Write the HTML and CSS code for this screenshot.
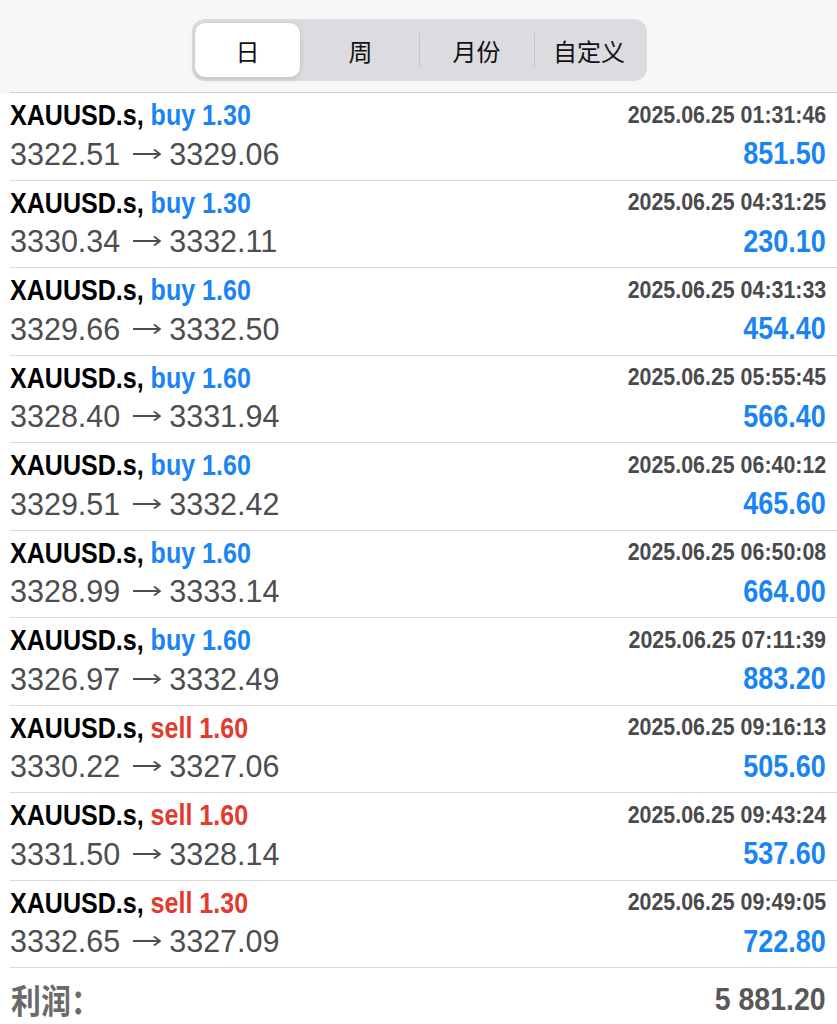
FILE: index.html
```html
<!DOCTYPE html>
<html lang="zh">
<head>
<meta charset="utf-8">
<title>历史</title>
<link rel="stylesheet" href="styles.css">
</head>
<body>
<header class="top">
  <div class="seg">
    <div class="seg-item active">日</div>
    <div class="seg-item">周</div>
    <div class="seg-item div">月份</div>
    <div class="seg-item div">自定义</div>
  </div>
</header>
<main class="list">
  <div class="row"><div class="line"><span class="sym">XAUUSD.s, <span class="buy">buy 1.30</span></span><span class="time">2025.06.25 01:31:46</span></div><div class="line"><span class="px">3322.51 <svg class="arr" viewBox="0 0 28 14" width="28" height="14"><path d="M0 7H27M21 2.5L27 7L21 11.5"/></svg> 3329.06</span><span class="pl">851.50</span></div></div>
  <div class="row"><div class="line"><span class="sym">XAUUSD.s, <span class="buy">buy 1.30</span></span><span class="time">2025.06.25 04:31:25</span></div><div class="line"><span class="px">3330.34 <svg class="arr" viewBox="0 0 28 14" width="28" height="14"><path d="M0 7H27M21 2.5L27 7L21 11.5"/></svg> 3332.11</span><span class="pl">230.10</span></div></div>
  <div class="row"><div class="line"><span class="sym">XAUUSD.s, <span class="buy">buy 1.60</span></span><span class="time">2025.06.25 04:31:33</span></div><div class="line"><span class="px">3329.66 <svg class="arr" viewBox="0 0 28 14" width="28" height="14"><path d="M0 7H27M21 2.5L27 7L21 11.5"/></svg> 3332.50</span><span class="pl">454.40</span></div></div>
  <div class="row"><div class="line"><span class="sym">XAUUSD.s, <span class="buy">buy 1.60</span></span><span class="time">2025.06.25 05:55:45</span></div><div class="line"><span class="px">3328.40 <svg class="arr" viewBox="0 0 28 14" width="28" height="14"><path d="M0 7H27M21 2.5L27 7L21 11.5"/></svg> 3331.94</span><span class="pl">566.40</span></div></div>
  <div class="row"><div class="line"><span class="sym">XAUUSD.s, <span class="buy">buy 1.60</span></span><span class="time">2025.06.25 06:40:12</span></div><div class="line"><span class="px">3329.51 <svg class="arr" viewBox="0 0 28 14" width="28" height="14"><path d="M0 7H27M21 2.5L27 7L21 11.5"/></svg> 3332.42</span><span class="pl">465.60</span></div></div>
  <div class="row"><div class="line"><span class="sym">XAUUSD.s, <span class="buy">buy 1.60</span></span><span class="time">2025.06.25 06:50:08</span></div><div class="line"><span class="px">3328.99 <svg class="arr" viewBox="0 0 28 14" width="28" height="14"><path d="M0 7H27M21 2.5L27 7L21 11.5"/></svg> 3333.14</span><span class="pl">664.00</span></div></div>
  <div class="row"><div class="line"><span class="sym">XAUUSD.s, <span class="buy">buy 1.60</span></span><span class="time">2025.06.25 07:11:39</span></div><div class="line"><span class="px">3326.97 <svg class="arr" viewBox="0 0 28 14" width="28" height="14"><path d="M0 7H27M21 2.5L27 7L21 11.5"/></svg> 3332.49</span><span class="pl">883.20</span></div></div>
  <div class="row"><div class="line"><span class="sym">XAUUSD.s, <span class="sell">sell 1.60</span></span><span class="time">2025.06.25 09:16:13</span></div><div class="line"><span class="px">3330.22 <svg class="arr" viewBox="0 0 28 14" width="28" height="14"><path d="M0 7H27M21 2.5L27 7L21 11.5"/></svg> 3327.06</span><span class="pl">505.60</span></div></div>
  <div class="row"><div class="line"><span class="sym">XAUUSD.s, <span class="sell">sell 1.60</span></span><span class="time">2025.06.25 09:43:24</span></div><div class="line"><span class="px">3331.50 <svg class="arr" viewBox="0 0 28 14" width="28" height="14"><path d="M0 7H27M21 2.5L27 7L21 11.5"/></svg> 3328.14</span><span class="pl">537.60</span></div></div>
  <div class="row"><div class="line"><span class="sym">XAUUSD.s, <span class="sell">sell 1.30</span></span><span class="time">2025.06.25 09:49:05</span></div><div class="line"><span class="px">3332.65 <svg class="arr" viewBox="0 0 28 14" width="28" height="14"><path d="M0 7H27M21 2.5L27 7L21 11.5"/></svg> 3327.09</span><span class="pl">722.80</span></div></div>
  <div class="total"><span class="tl">利润：</span><span class="tv">5 881.20</span></div>
</main>
</body>
</html>
```
FILE: styles.css
```css
* { box-sizing: border-box; }
html, body { margin: 0; padding: 0; background: #ffffff; }
body { width: 837px; height: 1024px; overflow: hidden; font-family: "Liberation Sans", Arial, "Noto Sans CJK SC", sans-serif; }

.top {
  height: 93px;
  background: #f7f7f7;
  display: flex;
  justify-content: center;
  padding-top: 19px;
  padding-left: 2px;
  position: relative;
}
.top::after {
  content: "";
  position: absolute;
  left: 10px; right: 0; bottom: 0;
  height: 1px;
  background: #cfcfcf;
}
.seg {
  height: 62px;
  width: 455px;
  background: #dcdce0;
  border-radius: 13px;
  padding: 3px;
  display: grid;
  grid-template-columns: 107px 117px 115px 110px;
}
.seg-item {
  display: flex;
  align-items: center;
  justify-content: center;
  font-family: "Noto Sans CJK SC", sans-serif;
  font-size: 24px;
  color: #111;
  position: relative;
}
.seg-item.active {
  background: #ffffff;
  border-radius: 10px;
  margin: 1px 2px 1px 0;
  box-shadow: 0 2px 6px rgba(0,0,0,0.12), 0 0 1px rgba(0,0,0,0.08);
}
.seg-item.div::before {
  content: "";
  position: absolute;
  left: 0; top: 11px; bottom: 11px;
  width: 1px;
  background: #c3c3c8;
}

.list { padding-left: 10px; }
.row {
  height: 87.5px;
  border-bottom: 1px solid #d9d9d9;
  padding: 2.5px 11px 0 0;
}
.line {
  display: flex;
  justify-content: space-between;
  align-items: center;
  height: 39px;
  white-space: nowrap;
}
.sym {
  display: inline-block;
  font-weight: bold;
  font-size: 30px;
  color: #000;
  transform: scaleX(0.835);
  transform-origin: left center;
}
.buy { color: #1a84f2; }
.sell { color: #e23a2c; }
.time {
  display: inline-block;
  font-weight: bold;
  font-size: 23.5px;
  color: #4a4a4c;
  transform: scaleX(0.91);
  transform-origin: right center;
}
.px {
  font-size: 30.5px;
  color: #4d4d50;
}
.arr {
  display: inline-block;
  vertical-align: 3.9px;
  margin: 0 0 0 4px;
  fill: none;
  stroke: #4d4d50;
  stroke-width: 1.8;
}
.pl {
  display: inline-block;
  font-weight: bold;
  font-size: 31px;
  color: #1a84f2;
  transform: scaleX(0.87);
  transform-origin: right center;
}
.total {
  display: flex;
  justify-content: space-between;
  align-items: center;
  height: 60px;
  padding: 2px 11px 0 1px;
}
.tl {
  font-family: "Noto Sans CJK TC", "Noto Sans CJK SC", sans-serif;
  font-weight: bold;
  font-size: 34px;
  color: #6a6a6a;
  transform: scaleX(0.88);
  transform-origin: left center;
  display: inline-block;
}
.tv {
  font-weight: bold;
  font-size: 32px;
  color: #58585a;
  transform: scaleX(0.89);
  transform-origin: right center;
  display: inline-block;
}
```
